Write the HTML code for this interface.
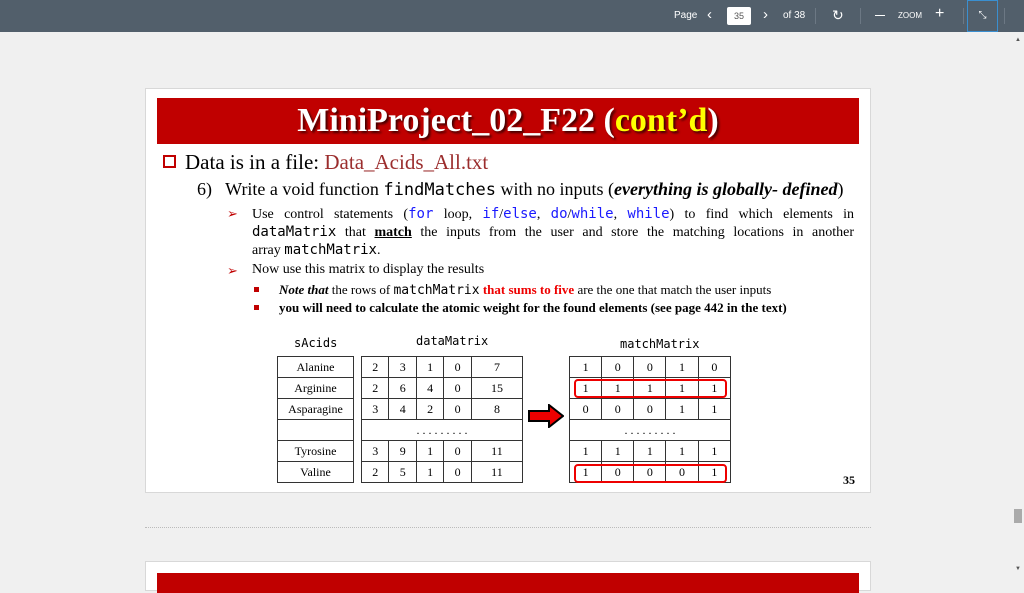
<!DOCTYPE html>
<html><head><meta charset="utf-8"><style>
*{margin:0;padding:0;box-sizing:border-box}
body{width:1024px;height:576px;overflow:hidden;background:#f0f0f0;font-family:"Liberation Serif",serif;position:relative}
.tb{position:absolute;left:0;top:0;width:1024px;height:32px;background:#525f6b;color:#fff;font-family:"Liberation Sans",sans-serif}
.tb span{position:absolute}
.page{position:absolute;left:145px;top:88px;width:726px;height:405px;background:#fff;border:1px solid #d8d8d8}
.p2{position:absolute;left:145px;top:561px;width:726px;height:30px;background:#fff;border:1px solid #d8d8d8}
.ab{position:absolute;white-space:nowrap}
.mono{font-family:"DejaVu Sans Mono",monospace}
.blue{color:#1a1aff}
.jl{position:absolute;left:106px;width:602px;font-size:14px;line-height:18px;white-space:nowrap;text-align:justify;text-align-last:justify}
table{position:absolute;border-collapse:collapse;font-size:12px;text-align:center}
td{border:1px solid #333;height:21px;padding:0}
</style></head><body>
<div class="tb">
<span style="left:674px;top:10px;font-size:10px">Page</span>
<span style="left:707px;top:6px;font-size:15px">‹</span>
<span style="left:727px;top:7px;width:24px;height:18px;background:#fff;color:#555;font-size:9px;text-align:center;line-height:18px;border-radius:2px">35</span>
<span style="left:763px;top:6px;font-size:15px">›</span>
<span style="left:783px;top:10px;font-size:10px">of 38</span>
<span style="left:815px;top:8px;width:1px;height:16px;background:#6c7884"></span>
<span style="left:832px;top:7px;font-size:14px">↻</span>
<span style="left:860px;top:8px;width:1px;height:16px;background:#6c7884"></span>
<span style="left:875px;top:15px;width:10px;height:1px;background:#fff"></span>
<span style="left:898px;top:11px;font-size:8px">ZOOM</span>
<span style="left:935px;top:5px;font-size:16px">+</span>
<span style="left:963px;top:8px;width:1px;height:16px;background:#6c7884"></span>
<span style="left:967px;top:0;width:31px;height:32px;border:1px solid #3a8fd0;font-size:10px;text-align:center;line-height:30px">⤡</span>
<span style="left:1004px;top:8px;width:1px;height:16px;background:#6c7884"></span>
</div>
<div class="ab" style="left:1014px;top:509px;width:8px;height:14px;background:#aaa"></div>
<div class="ab" style="left:1015px;top:37px;font-size:6px;color:#555">▲</div>
<div class="ab" style="left:1015px;top:566px;font-size:6px;color:#555">▼</div>
<div class="ab" style="left:145px;top:527px;width:726px;border-top:1px dotted #bbb"></div>
<div class="page">
<div class="ab" style="left:11px;top:9px;width:702px;height:46px;background:#c00000;color:#fff;font-weight:bold;font-size:34px;text-align:center;line-height:46px;text-shadow:2px 2px 2px #400">MiniProject_02_F22 (<span style="color:#ffff00">cont’d</span>)</div>
<div class="ab" style="left:17px;top:66px;width:13px;height:13px;border:2px solid #c00000"></div>
<div class="ab" style="left:39px;top:61px;font-size:21px">Data is in a file: <span style="color:#9b2d2d">Data_Acids_All.txt</span></div>
<div class="ab" style="left:51px;top:90px;font-size:18px">6)&nbsp;&nbsp; Write a void function <span class="mono" style="font-size:17px">findMatches</span> with no inputs (<b><i>everything is globally- defined</i></b>)</div>
<div class="ab" style="left:81px;top:117px;font-size:13px;color:#c00000">➢</div>
<div class="jl" style="top:116px">Use control statements (<span class="mono blue">for</span> loop, <span class="mono blue">if</span>/<span class="mono blue">else</span>, <span class="mono blue">do</span>/<span class="mono blue">while</span>, <span class="mono blue">while</span>) to find which elements in</div>
<div class="jl" style="top:134px"><span class="mono">dataMatrix</span> that <b><u>match</u></b> the inputs from the user and store the matching locations in another</div>
<div class="ab" style="left:106px;top:152px;font-size:14px;line-height:18px">array <span class="mono">matchMatrix</span>.</div>
<div class="ab" style="left:81px;top:174px;font-size:13px;color:#c00000">➢</div>
<div class="ab" style="left:106px;top:173px;font-size:14px">Now use this matrix to display the results</div>
<div class="ab" style="left:108px;top:198px;width:5px;height:5px;background:#c00000"></div>
<div class="ab" style="left:133px;top:193px;font-size:13px"><b><i>Note that</i></b> the rows of <span class="mono">matchMatrix</span> <b style="color:#e00">that sums to five</b> are the one that match the user inputs</div>
<div class="ab" style="left:108px;top:216px;width:5px;height:5px;background:#c00000"></div>
<div class="ab" style="left:133px;top:211px;font-size:13px;font-weight:bold">you will need to calculate the atomic weight for the found elements (see page 442 in the text)</div>
<div class="ab mono" style="left:148px;top:247px;font-size:12px">sAcids</div>
<div class="ab mono" style="left:270px;top:245px;font-size:12px">dataMatrix</div>
<div class="ab mono" style="left:474px;top:248px;font-size:12px">matchMatrix</div>
<table style="left:131px;top:267px;width:77px"><tr><td>Alanine</td></tr><tr><td>Arginine</td></tr><tr><td>Asparagine</td></tr><tr><td></td></tr><tr><td>Tyrosine</td></tr><tr><td>Valine</td></tr></table>
<table style="left:215px;top:267px;width:162px"><tr><td>2</td><td>3</td><td>1</td><td>0</td><td>7</td></tr><tr><td>2</td><td>6</td><td>4</td><td>0</td><td>15</td></tr><tr><td>3</td><td>4</td><td>2</td><td>0</td><td>8</td></tr><tr><td colspan="5">. . . . . . . . .</td></tr><tr><td>3</td><td>9</td><td>1</td><td>0</td><td>11</td></tr><tr><td>2</td><td>5</td><td>1</td><td>0</td><td>11</td></tr></table>
<table style="left:423px;top:267px;width:162px"><tr><td>1</td><td>0</td><td>0</td><td>1</td><td>0</td></tr><tr><td>1</td><td>1</td><td>1</td><td>1</td><td>1</td></tr><tr><td>0</td><td>0</td><td>0</td><td>1</td><td>1</td></tr><tr><td colspan="5">. . . . . . . . .</td></tr><tr><td>1</td><td>1</td><td>1</td><td>1</td><td>1</td></tr><tr><td>1</td><td>0</td><td>0</td><td>0</td><td>1</td></tr></table>
<div class="ab" style="left:428px;top:290px;width:153px;height:19px;border:2px solid #e00;border-radius:4px"></div>
<div class="ab" style="left:428px;top:375px;width:153px;height:19px;border:2px solid #e00;border-radius:4px"></div>
<svg class="ab" style="left:382px;top:315px" width="36" height="24"><path d="M1 7H21V1L35 12L21 23V17H1Z" fill="#e00" stroke="#000" stroke-width="2"/></svg>
<div class="ab" style="left:697px;top:384px;font-size:12px;font-weight:bold">35</div>
</div>
<div class="p2"><div class="ab" style="left:11px;top:11px;width:702px;height:20px;background:#c00000"></div></div>
</body></html>
